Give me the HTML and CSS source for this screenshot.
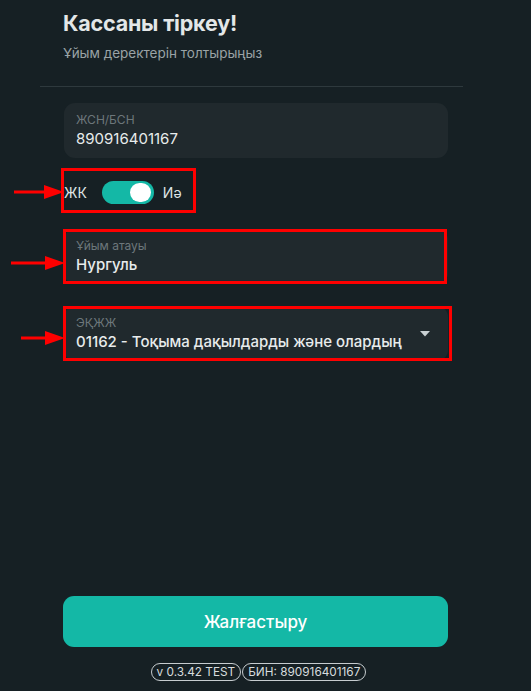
FILE: index.html
```html
<!DOCTYPE html>
<html lang="kk">
<head>
<meta charset="utf-8">
<link rel="stylesheet" href="styles.css">
</head>
<body>
<div class="page">
  <header class="head">
    <h1 class="title">Кассаны тіркеу!</h1>
    <p class="subtitle">Ұйым деректерін толтырыңыз</p>
  </header>
  <div class="divider"></div>
  <main class="form">
    <div class="field">
      <span class="label">ЖСН/БСН</span>
      <span class="value">890916401167</span>
    </div>
    <div class="toggle-row">
      <span class="toggle-text">ЖК</span>
      <span class="switch"><span class="knob"></span></span>
      <span class="toggle-text">Иә</span>
      <span class="mark mark-toggle"></span>
      <svg class="arrow arrow-1" width="50" height="16" viewBox="0 0 50 16"><path d="M0 8H34" stroke="#f00" stroke-width="3"/><path d="M30 1L50 8L30 15Z" fill="#f00"/></svg>
    </div>
    <div class="field field-name">
      <span class="label">Ұйым атауы</span>
      <span class="value bold">Нургуль</span>
      <span class="mark mark-name"></span>
      <svg class="arrow arrow-2" width="54" height="16" viewBox="0 0 54 16"><path d="M0 8H38" stroke="#f00" stroke-width="3"/><path d="M34 1L54 8L34 15Z" fill="#f00"/></svg>
    </div>
    <div class="field field-select">
      <span class="label">ЭҚЖЖ</span>
      <span class="value bold">01162 - Тоқыма дақылдарды және олардың</span>
      <svg class="caret" width="10" height="6" viewBox="0 0 10 6"><path d="M0 0H10L5 5.5Z" fill="#c9d0d3"/></svg>
      <span class="mark mark-select"></span>
      <svg class="arrow arrow-3" width="44" height="16" viewBox="0 0 44 16"><path d="M0 8H28" stroke="#f00" stroke-width="3"/><path d="M24 1L44 8L24 15Z" fill="#f00"/></svg>
    </div>
  </main>
  <button class="submit">Жалғастыру</button>
  <footer class="foot">
    <span class="badge">v 0.3.42 TEST</span>
    <span class="badge">БИН: 890916401167</span>
  </footer>
</div>
</body>
</html>
```
FILE: styles.css
```css
* { box-sizing: border-box; }
html, body { margin: 0; padding: 0; }
body {
  background: #162024;
  color: #e6eaeb;
  font-family: Inter, "Noto Sans", sans-serif;
}
.page {
  width: 531px;
  height: 691px;
  display: flex;
  flex-direction: column;
  padding: 0 0 10px 0;
}
.head { padding: 10px 0 0 63px; }
.title {
  margin: 0;
  font-size: 21.5px;
  font-weight: 700;
  letter-spacing: -0.2px;
  color: #e3e7e8;
  line-height: 26px;
}
.subtitle {
  margin: 9px 0 0;
  font-size: 13.5px;
  color: #9aa3a6;
  line-height: 17px;
}
.divider {
  margin: 24px 68px 0 40px;
  height: 1px;
  background: #2e393d;
}
.form {
  margin: 16px 0 0 64px;
  width: 384px;
  display: flex;
  flex-direction: column;
}
.field {
  position: relative;
  height: 55px;
  background: #20292d;
  border-radius: 11px;
  padding: 9px 12px 0;
  display: flex;
  flex-direction: column;
}
.label {
  font-size: 12px;
  color: #6d777b;
  line-height: 15px;
}
.value {
  margin-top: 2px;
  font-size: 15px;
  line-height: 20px;
  color: #e8ecec;
}
.value.bold { font-weight: 500; }
.toggle-row {
  position: relative;
  margin: 23px 0 25px;
  height: 23px;
  display: flex;
  align-items: center;
}
.toggle-text { font-size: 14px; color: #dfe4e5; }
.switch {
  margin: 0 9px 0 15px;
  width: 52px;
  height: 23px;
  border-radius: 12px;
  background: #14b8a6;
  position: relative;
}
.knob {
  position: absolute;
  right: 3px;
  top: 2px;
  width: 21px;
  height: 19px;
  border-radius: 10px;
  background: #ffffff;
}
.field-select { margin-top: 22px; }
.caret { position: absolute; right: 18px; top: 25px; }
.mark {
  position: absolute;
  border: 3px solid #f00;
  pointer-events: none;
}
.mark-toggle { left: -3px; top: -13px; width: 135px; height: 45px; }
.mark-name { left: -1px; top: 0; width: 384px; height: 55px; }
.mark-select { left: -1px; top: 0; width: 389px; height: 55px; }
.arrow { position: absolute; }
.arrow-1 { left: -50px; top: 3px; }
.arrow-2 { left: -53px; top: 26px; }
.arrow-3 { left: -43px; top: 24px; }
.submit {
  margin: auto 0 0 63px;
  width: 385px;
  height: 51px;
  border: none;
  border-radius: 11px;
  background: #14b8a6;
  color: #ffffff;
  font-family: inherit;
  font-size: 17px;
  font-weight: 500;
}
.foot {
  margin-top: 16px;
  display: flex;
  justify-content: center;
  gap: 1px;
  padding-right: 14px;
}
.badge {
  border: 1px solid #c6cccf;
  border-radius: 9px;
  padding: 0 5px;
  height: 18px;
  line-height: 16px;
  font-size: 11.8px;
  color: #d7dcde;
}
```
